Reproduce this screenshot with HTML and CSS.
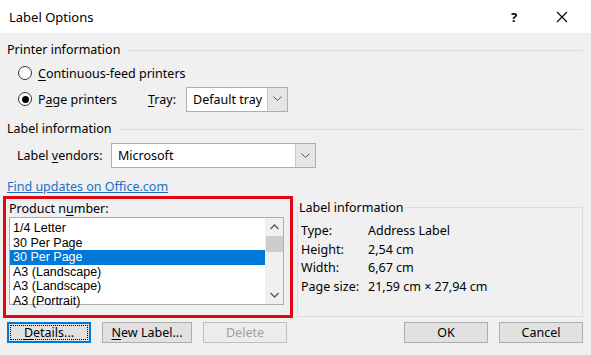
FILE: index.html
```html
<!DOCTYPE html>
<html lang="en">
    <head>
        <meta charset="UTF-8">
        <title>Label Options</title>
        <link rel="stylesheet" href="styles.css">
    </head>
    <body>
        <div class="titlebar">
            <div class="title">Label Options</div>
            <div class="help">?</div>
            <div class="close">
                <svg width="12" height="12" viewBox="0 0 12 12"><path d="M1 1L11 11M11 1L1 11" stroke="#000" stroke-width="1.1" fill="none"/></svg>
            </div>
        </div>
        <div class="dialog">
            <div class="group-head"><span>Printer information</span><i></i></div>
            <div class="radios">
                <div class="radio-row">
                    <span class="radio"></span>
                    <span><u>C</u>ontinuous-feed printers</span>
                </div>
                <div class="radio-row">
                    <span class="radio checked"></span>
                    <span class="page-label">P<u>a</u>ge printers</span>
                    <span class="tray-label"><u>T</u>ray:</span>
                    <div class="select tray">
                        <span>Default tray</span>
                        <b class="drop"><svg width="9" height="6" viewBox="0 0 9 6"><path d="M0.5 0.5L4.5 4.5L8.5 0.5" stroke="#555" fill="none"/></svg></b>
                    </div>
                </div>
            </div>

            <div class="group-head second"><span>Label information</span><i></i></div>
            <div class="vendor-row">
                <span>Label <u>v</u>endors:</span>
                <div class="select vendor">
                    <span>Microsoft</span>
                    <b class="drop"><svg width="9" height="6" viewBox="0 0 9 6"><path d="M0.5 0.5L4.5 4.5L8.5 0.5" stroke="#555" fill="none"/></svg></b>
                </div>
            </div>
            <a class="link" href="javascript:void(0);">Find updates on Office.com</a>

            <div class="middle">
                <div class="product">
                    <div class="product-label">Product n<u>u</u>mber:</div>
                    <div class="listbox">
                        <ul class="items">
                            <li>1/4 Letter</li>
                            <li>30 Per Page</li>
                            <li class="current">30 Per Page</li>
                            <li>A3 (Landscape)</li>
                            <li>A3 (Landscape)</li>
                            <li>A3 (Portrait)</li>
                        </ul>
                        <div class="scrollbar">
                            <svg class="arrow" width="9" height="6" viewBox="0 0 9 6"><path d="M0.5 5L4.5 1L8.5 5" stroke="#555" stroke-width="1.3" fill="none"/></svg>
                            <div class="thumb"></div>
                            <div class="track"></div>
                            <svg class="arrow" width="9" height="6" viewBox="0 0 9 6"><path d="M0.5 1L4.5 5L8.5 1" stroke="#555" stroke-width="1.3" fill="none"/></svg>
                        </div>
                    </div>
                </div>
                <fieldset class="info">
                    <legend>Label information</legend>
                    <div class="info-row"><span>Type:</span><span>Address Label</span></div>
                    <div class="info-row"><span>Height:</span><span>2,54 cm</span></div>
                    <div class="info-row"><span>Width:</span><span>6,67 cm</span></div>
                    <div class="info-row"><span>Page size:</span><span>21,59 cm × 27,94 cm</span></div>
                </fieldset>
            </div>

            <div class="buttons">
                <button class="btn focus"><span><u>D</u>etails...</span></button>
                <button class="btn wide"><u>N</u>ew Label...</button>
                <button class="btn disabled">Delete</button>
                <div class="spacer"></div>
                <button class="btn">OK</button>
                <button class="btn">Cancel</button>
            </div>
        </div>
    </body>
</html>
```

FILE: styles.css
```css
*{
    margin: 0;
    padding: 0;
    box-sizing: border-box;
}
ul{
    list-style: none;
}
html,body{
    width: 591px;
    height: 355px;
    overflow: hidden;
}
body{
    font-family: "Noto Sans", "Liberation Sans", sans-serif;
    font-size: 12px;
    color: #000;
    background: #f0f0f0;
}
u{
    text-decoration: underline;
    text-underline-offset: 2px;
}
.titlebar{
    height: 33px;
    background: #fff;
    display: flex;
    align-items: center;
    padding-left: 9px;
}
.title{
    flex: 1;
    font-size: 13px;
}
.help{
    width: 20px;
    font-size: 13px;
    font-weight: bold;
    margin-right: 28px;
    text-align: center;
}
.close{
    width: 20px;
    margin-right: 19px;
    display: flex;
    justify-content: center;
}
.dialog{
    padding: 0 8px 0 7px;
}
.group-head{
    display: flex;
    align-items: center;
    height: 17px;
    margin-top: 8px;
    font-size: 12.5px;
}
.group-head i{
    flex: 1;
    height: 1px;
    background: #dcdcdc;
    margin-left: 8px;
    margin-top: 1px;
}
.group-head.second{
    margin-top: 8px;
}
.radios{
    padding-top: 2px;
}
.radio-row{
    display: flex;
    align-items: center;
    height: 26px;
    padding-left: 11px;
    font-size: 12.5px;
}
.radio{
    width: 14px;
    height: 14px;
    border: 1px solid #333;
    border-radius: 50%;
    background: #fff;
    margin-right: 6px;
    position: relative;
}
.radio.checked::after{
    content: "";
    position: absolute;
    left: 2.5px;
    top: 2.5px;
    width: 7px;
    height: 7px;
    border-radius: 50%;
    background: #000;
}
.page-label{
    width: 110px;
}
.tray-label{
    width: 38px;
}
.select{
    display: flex;
    align-items: center;
    height: 25px;
    background: #fff;
    border: 1px solid #adadad;
    padding-left: 6px;
}
.select span{
    flex: 1;
}
.select .drop{
    width: 20px;
    height: 23px;
    background: #e5e5e5;
    border-left: 1px solid #c8c8c8;
    display: flex;
    align-items: center;
    justify-content: center;
}
.tray{
    width: 102px;
}
.vendor-row{
    display: flex;
    align-items: center;
    margin-top: 6px;
    padding-left: 10px;
    font-size: 12.5px;
}
.vendor-row > span{
    width: 94px;
}
.vendor{
    width: 205px;
}
.link{
    display: inline-block;
    margin-top: 10px;
    color: #1a6fc4;
    text-decoration: underline;
    font-size: 12.5px;
}
.middle{
    display: flex;
    margin-top: 1px;
}
.product{
    width: 290px;
    height: 122px;
    border: 3px solid #e30613;
    margin-left: -4px;
    padding: 1px 0 0 3px;
}
.product-label{
    font-size: 12.5px;
    height: 17px;
}
.listbox{
    display: flex;
    width: 275px;
    height: 88px;
    background: #fff;
    border: 1px solid #adadad;
}
.items{
    flex: 1;
    padding-top: 3px;
    font-family: "Liberation Sans", sans-serif;
    font-size: 12.5px;
}
.items li{
    height: 14.5px;
    line-height: 14.5px;
    padding-left: 3px;
}
.items li.current{
    background: #0078d7;
    color: #fff;
}
.scrollbar{
    width: 18px;
    background: #f0f0f0;
    display: flex;
    flex-direction: column;
    align-items: center;
}
.scrollbar .arrow{
    margin: 6px 0;
}
.scrollbar .thumb{
    width: 17px;
    height: 16px;
    background: #cdcdcd;
}
.scrollbar .track{
    flex: 1;
}
.info{
    flex: 1;
    margin-left: 4px;
    margin-top: 3px;
    border: 1px solid #dcdcdc;
    padding: 6px 0 0 3px;
    height: 118px;
}
.info legend{
    font-size: 12.5px;
    padding-right: 2px;
    margin-left: -2px;
}
.info-row{
    display: flex;
    height: 18.7px;
    font-size: 12.5px;
}
.info-row span:first-child{
    width: 67px;
}
.buttons{
    display: flex;
    gap: 11px;
    margin-top: 4px;
}
.spacer{
    flex: 1;
}
.btn{
    width: 84px;
    height: 21px;
    background: #e1e1e1;
    border: 1px solid #adadad;
    font-family: inherit;
    font-size: 12.5px;
    color: #000;
}
.btn.wide{
    width: 90px;
}
.btn.focus{
    border: 2px solid #0078d7;
    padding: 1px;
}
.btn.focus span{
    display: block;
    height: 100%;
    border: 1px dotted #000;
    line-height: 13px;
}
.btn.disabled{
    background: #ececec;
    border-color: #bfbfbf;
    color: #a0a0a0;
}
```
